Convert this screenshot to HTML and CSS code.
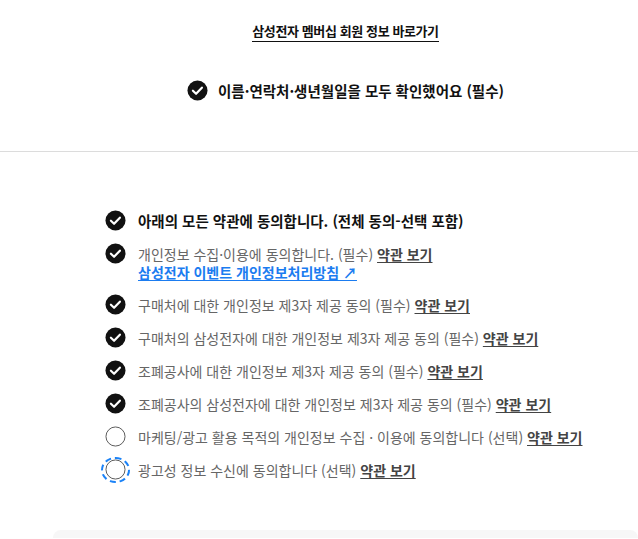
FILE: index.html
```html
<!DOCTYPE html>
<html lang="ko">
<head>
<meta charset="utf-8">
<link rel="stylesheet" href="styles.css">
</head>
<body>
<section class="top">
  <a class="member-link" href="#">삼성전자 멤버십 회원 정보 바로가기</a>
  <div class="confirm">
    <svg class="ico" viewBox="0 0 22 22"><circle cx="11" cy="11" r="10.5" fill="#111"/><path d="M6.2 11.3 L9.5 14.4 L15.6 8" fill="none" stroke="#fff" stroke-width="2.3" stroke-linecap="round" stroke-linejoin="round"/></svg>
    <span>이름·연락처·생년월일을 모두 확인했어요 (필수)</span>
  </div>
</section>
<hr class="divider">
<section class="terms">
  <div class="row all">
    <svg class="ico" viewBox="0 0 22 22"><circle cx="11" cy="11" r="10.5" fill="#111"/><path d="M6.2 11.3 L9.5 14.4 L15.6 8" fill="none" stroke="#fff" stroke-width="2.3" stroke-linecap="round" stroke-linejoin="round"/></svg>
    <span class="txt">아래의 모든 약관에 동의합니다. (전체 동의-선택 포함)</span>
  </div>
  <div class="row">
    <svg class="ico" viewBox="0 0 22 22"><circle cx="11" cy="11" r="10.5" fill="#111"/><path d="M6.2 11.3 L9.5 14.4 L15.6 8" fill="none" stroke="#fff" stroke-width="2.3" stroke-linecap="round" stroke-linejoin="round"/></svg>
    <span class="txt multi"><span class="line">개인정보 수집·이용에 동의합니다. (필수) <a class="view" href="#">약관 보기</a></span><a class="policy" href="#">삼성전자 이벤트 개인정보처리방침 ↗</a></span>
  </div>
  <div class="row">
    <svg class="ico" viewBox="0 0 22 22"><circle cx="11" cy="11" r="10.5" fill="#111"/><path d="M6.2 11.3 L9.5 14.4 L15.6 8" fill="none" stroke="#fff" stroke-width="2.3" stroke-linecap="round" stroke-linejoin="round"/></svg>
    <span class="txt">구매처에 대한 개인정보 제3자 제공 동의 (필수) <a class="view" href="#">약관 보기</a></span>
  </div>
  <div class="row">
    <svg class="ico" viewBox="0 0 22 22"><circle cx="11" cy="11" r="10.5" fill="#111"/><path d="M6.2 11.3 L9.5 14.4 L15.6 8" fill="none" stroke="#fff" stroke-width="2.3" stroke-linecap="round" stroke-linejoin="round"/></svg>
    <span class="txt">구매처의 삼성전자에 대한 개인정보 제3자 제공 동의 (필수) <a class="view" href="#">약관 보기</a></span>
  </div>
  <div class="row">
    <svg class="ico" viewBox="0 0 22 22"><circle cx="11" cy="11" r="10.5" fill="#111"/><path d="M6.2 11.3 L9.5 14.4 L15.6 8" fill="none" stroke="#fff" stroke-width="2.3" stroke-linecap="round" stroke-linejoin="round"/></svg>
    <span class="txt">조폐공사에 대한 개인정보 제3자 제공 동의 (필수) <a class="view" href="#">약관 보기</a></span>
  </div>
  <div class="row">
    <svg class="ico" viewBox="0 0 22 22"><circle cx="11" cy="11" r="10.5" fill="#111"/><path d="M6.2 11.3 L9.5 14.4 L15.6 8" fill="none" stroke="#fff" stroke-width="2.3" stroke-linecap="round" stroke-linejoin="round"/></svg>
    <span class="txt">조폐공사의 삼성전자에 대한 개인정보 제3자 제공 동의 (필수) <a class="view" href="#">약관 보기</a></span>
  </div>
  <div class="row">
    <svg class="ico" viewBox="0 0 22 22"><circle cx="11" cy="11" r="10" fill="#fff" stroke="#555" stroke-width="1"/></svg>
    <span class="txt">마케팅/광고 활용 목적의 개인정보 수집 · 이용에 동의합니다 (선택) <a class="view" href="#">약관 보기</a></span>
  </div>
  <div class="row">
    <span class="focus"><svg class="ico" viewBox="0 0 22 22"><circle cx="11" cy="11" r="10" fill="#fff" stroke="#555" stroke-width="1"/></svg></span>
    <span class="txt">광고성 정보 수신에 동의합니다 (선택) <a class="view" href="#">약관 보기</a></span>
  </div>
</section>
<div class="panel"></div>
</body>
</html>
```
FILE: styles.css
```css
html, body {
  margin: 0;
  padding: 0;
  background: #fff;
  font-family: "Noto Sans CJK KR", "Noto Sans", sans-serif;
  color: #111;
  overflow: hidden;
}
.top {
  display: flex;
  flex-direction: column;
  align-items: center;
  padding-top: 22px;
  margin-left: 53px;
}
.member-link {
  font-size: 13px;
  font-weight: 700;
  color: #111;
  text-decoration: none;
  border-bottom: 1px solid #111;
  line-height: 18px;
  padding-bottom: 1px;
  letter-spacing: -0.4px;
}
.confirm {
  display: flex;
  align-items: center;
  gap: 10px;
  margin-top: 38px;
  font-size: 14.5px;
  font-weight: 700;
}
.ico {
  width: 21px;
  height: 21px;
  flex: none;
  display: block;
}
.divider {
  border: 0;
  border-top: 1px solid #dcdcdc;
  margin: 50px 0 0;
  height: 0;
}
.terms {
  padding: 60px 0 0 105px;
  display: flex;
  flex-direction: column;
  gap: 15px;
}
.row {
  display: flex;
  align-items: flex-start;
  gap: 12px;
  font-size: 14px;
  line-height: 18px;
  color: #666;
}
.row .ico {
  margin: -2px 0 -1px;
}
.row.all {
  color: #111;
  font-weight: 700;
  font-size: 14.5px;
}
.txt {
  display: block;
  white-space: nowrap;
}
.txt.multi {
  display: flex;
  flex-direction: column;
  align-items: flex-start;
}
.line {
  display: block;
}
.view {
  color: #444;
  font-weight: 700;
  text-decoration: underline;
  text-underline-offset: 2px;
}
.policy {
  color: #1b7cf0;
  font-weight: 700;
  text-decoration: underline;
  text-underline-offset: 2px;
}
.focus {
  position: relative;
  display: block;
  flex: none;
}
.focus::after {
  content: "";
  position: absolute;
  left: -4px;
  top: -4px;
  right: -4px;
  bottom: -4px;
  border: 2px dashed #1a82f7;
  border-radius: 50%;
}
.panel {
  margin: 51px 0 0 53px;
  height: 8px;
  background: #f7f7f7;
  border-radius: 8px 8px 0 0;
}
```
